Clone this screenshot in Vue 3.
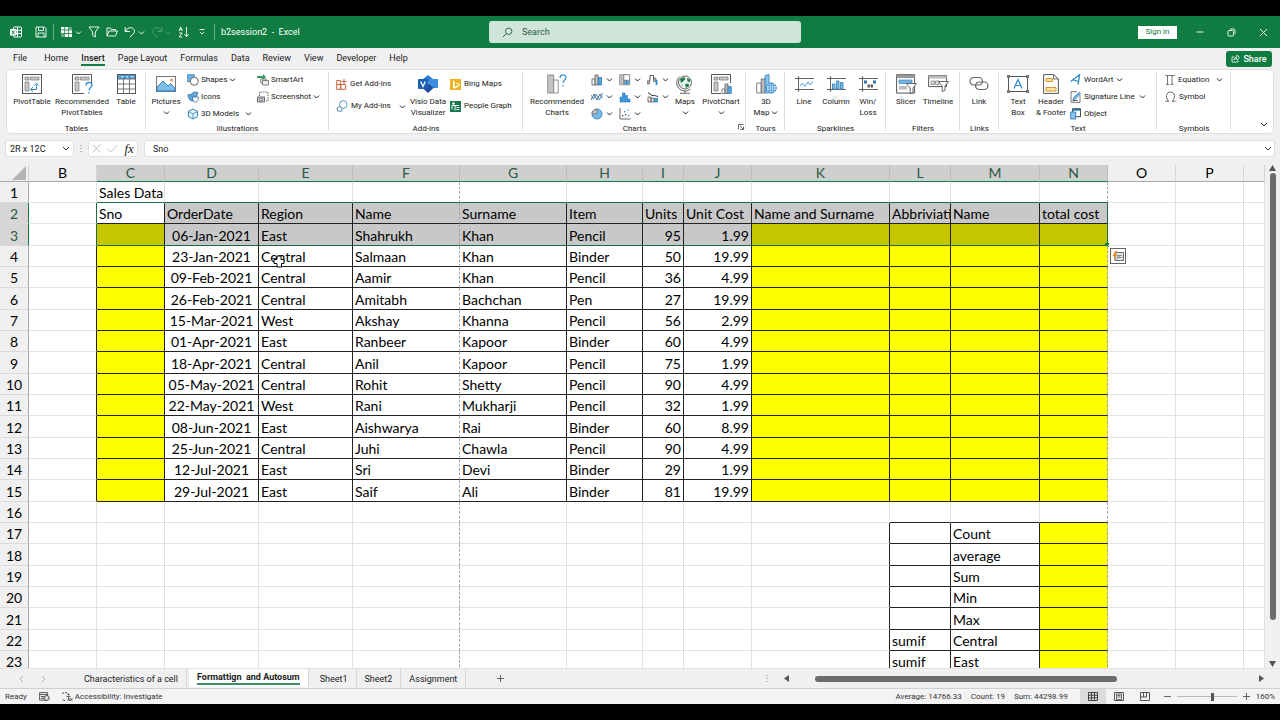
<script setup>
import { h, ref } from 'vue'

const chev = '<path d="M1 1.5 3.5 4 6 1.5" fill="none" stroke="currentColor" stroke-width="1"/>'

const icons = {
  chev: [7, 5, chev],
  excel: [12, 12, '<g fill="none" stroke="#fff"><rect x="3.5" y="1" width="8" height="10" rx="1"/><path d="M7.5 1v10M3.5 4.3h8M3.5 7.6h8"/></g><rect x="0" y="3" width="6.5" height="6.5" rx=".8" fill="#fff"/><path d="M1.7 4.5l3 3.6M4.7 4.5l-3 3.6" stroke="#107c41"/>'],
  save: [12, 12, '<g fill="none" stroke="#fff" stroke-width=".9"><path d="M1 1h8.5L11 2.5V11H1z"/><path d="M3.5 1v3.5h5V1M3 11V7h6v4"/></g>'],
  tableQ: [13, 12, '<path d="M1 1h11v10H1z" fill="#fff"/><path d="M1 4h11M1 7.5h11M4.7 1v10M8.4 1v10" stroke="#107c41" stroke-width=".8"/><path d="M8.8 1h3.2v3H8.8zM1 8h3.2v3H1z" fill="#5fae83"/>'],
  funnel: [12, 12, '<path d="M1 1h10L7.3 6v5L4.7 9.5V6z" fill="none" stroke="#fff" stroke-width=".9"/>'],
  folder: [12, 12, '<path d="M1 10V2h3.5l1 1.5h4V5M1 10l2-5h8.5l-2 5z" fill="none" stroke="#fff" stroke-width=".9"/>'],
  undo: [12, 12, '<path d="M1.2 1v4.5h4.5M1.4 5.3C3.5 1.7 6.5 1 8.6 2.2c2.3 1.4 2.4 4 .8 5.6L5.8 11.3" fill="none" stroke="#fff"/>'],
  redo: [12, 12, '<path d="M10.8 1v4.5H6.3M10.6 5.3C8.5 1.7 5.5 1 3.4 2.2 1.1 3.6 1 6.200 2.600 7.800L6.200 11.300" fill="none" stroke="#4e9f74"/>'],
  sort: [12, 12, '<g fill="none" stroke="#fff" stroke-width=".9"><path d="M1 5l1.700-4 1.700 4M1.600 3.700h2.200M1.200 7h3L1.200 11h3.200M8.500 1v9.500M6.300 8.200l2.200 2.500 2.200-2.500"/></g>'],
  more: [8, 8, '<path d="M1.500 1.500h5M2 4l2 2 2-2" fill="none" stroke="#fff" stroke-width=".9"/>'],
  search: [11, 11, '<path d="M1 10l3.500-3.500" stroke="#2c5c43"/><circle cx="6.700" cy="4.300" r="3.200" fill="none" stroke="#2c5c43" stroke-width=".9"/>'],
  min: [8, 8, '<path d="M.500 4h7" stroke="#fff" stroke-width=".9"/>'],
  restore: [9, 9, '<g fill="none" stroke="#fff" stroke-width=".9"><rect x="1" y="2.500" width="5.500" height="5.500" rx="1"/><path d="M3 1h3.500A1.500 1.500 0 018 2.500V6"/></g>'],
  close: [9, 9, '<path d="M1 1l7 7M8 1L1 8" stroke="#fff" stroke-width=".9"/>'],
  share: [9, 9, '<path d="M3.500 3H1v5h6V6.300M3 6c.300-2 1.500-3 3-3V1l2.500 2.700L6 6V4.500C4.700 4.500 3.800 5 3 6z" fill="none" stroke="#fff" stroke-width=".8"/>'],
  pivot: [20, 20, '<rect x=".5" y=".5" width="19" height="19" fill="#fff" stroke="#555"/><path d="M3 3h4v3H3zM8.500 3H17v3H8.500zM3 8h4v9H3z" fill="#c8c8c8" stroke="#777" stroke-width=".7"/><path d="M9 15.500h5.500v-5M11 13l-2.300 2.500 2.300 2.200M12.300 11.500l2.200-2.300 2.200 2.300" fill="none" stroke="#2b88d0"/>'],
  recPivot: [21, 20, '<path d="M12 19.500H.5V.5h19V9" fill="#fff" stroke="#555"/><path d="M3 3h4v3H3zM8.500 3H17v3H8.500zM3 8h4v9H3z" fill="#c8c8c8" stroke="#777" stroke-width=".7"/><path d="M14 11.500c0-4 6-4 6-.5 0 2.700-3 2.500-3 5.500M17 18v1.500" fill="none" stroke="#2b88d0" stroke-width="1.300"/>'],
  table: [19, 20, '<rect x=".5" y=".5" width="18" height="19" fill="#fff" stroke="#555"/><path d="M1 1h17v4H1z" fill="#4a9bd8"/><path d="M4 2.300h2.500L5.200 3.900zM9 2.300h2.500l-1.300 1.600zM14 2.300h2.500l-1.300 1.600z" fill="#fff"/><path d="M.5 5h18M.5 10h18M.5 15h18M6.500 5v15M12.500 5v15" stroke="#666" stroke-width=".9"/>'],
  picture: [20, 16, '<rect x=".5" y=".5" width="19" height="15" fill="#fff" stroke="#777"/><path d="M1 11l6-6 5 5 2.500-2.500L19 12v3H1z" fill="#7cbdea" stroke="#2878b8" stroke-width=".9"/><circle cx="15.500" cy="4" r="1.300" fill="#e0893c"/>'],
  shapes: [12, 12, '<path d="M.7.700h6.500v7H.7z" fill="#6fb5e8" stroke="#2b78b5" stroke-width=".8"/><circle cx="7.300" cy="7.300" r="4" fill="#fff" stroke="#555" stroke-width=".9"/>'],
  iconsI: [12, 12, '<path d="M1 3.500C2.500 4 4 3.500 5 2.500 7 .3 10 1 11 1.500L9.500 5.500C9 9.500 5 11.500 3 9 1.500 7.500 1 5.500 1 3.500z" fill="#5aa3d8" stroke="#2b6da5" stroke-width=".7"/><path d="M5.500 6h6c0 3-1 5-3 5s-3-2-3-5z" fill="#fff" stroke="#2b6da5" stroke-width=".8"/><circle cx="8" cy="2.800" r=".6" fill="#fff"/>'],
  cube: [12, 12, '<path d="M6 1l4.500 2.400v5.200L6 11 1.500 8.600V3.400z" fill="#eaf5fd" stroke="#2b88c0"/><path d="M1.500 3.400L6 6l4.500-2.600M6 6v5" fill="none" stroke="#2b88c0" stroke-width=".8"/>'],
  smart: [12, 12, '<path d="M0 2h6V0l3 3-2.500 3H5V4H0z" fill="#3a9c64"/><path d="M3.500 5h6v4h-6z" fill="#d9d9d9" stroke="#777" stroke-width=".7"/><path d="M5.500 6.500h6V11h-6z" fill="#eee" stroke="#666" stroke-width=".8"/>'],
  shot: [12, 12, '<path d="M2.500 5V1h8.500v9H9" fill="none" stroke="#666" stroke-dasharray="1.500 1"/><rect x=".5" y="6" width="7" height="5" fill="#ccc" stroke="#555" stroke-width=".8"/><circle cx="4" cy="8.500" r="1.400" fill="#fff" stroke="#444" stroke-width=".7"/>'],
  getAdd: [11, 11, '<path d="M.7 1.500h4v4h-4zM.7 5.500h4v4.800h-4zM4.700 5.500h5v4.800h-5zM8 0v5M5.700 2.500h4.800" fill="none" stroke="#c9522e" stroke-width=".9"/>'],
  myAdd: [12, 12, '<circle cx="7.300" cy="4.500" r="3.800" fill="none" stroke="#4794bf" stroke-width=".9"/><path d="M3.500 6.500L1 8l.500 3 4 .300.700-3z" fill="#fff" stroke="#4d7f9e" stroke-width=".9"/>'],
  visio: [20, 18, '<path d="M10 0l5 4-5 4-5-4z" fill="#2d7fd1"/><path d="M11 4h9v9h-9z" fill="#3a8de0"/><path d="M10 8l5.500 5-5.500 5-5.500-5z" fill="#1b4f9e"/><rect x="0" y="4" width="10" height="10" rx="1" fill="#1a5fb4"/><path d="M2.700 6.500L5 11.500l2.300-5" fill="none" stroke="#fff" stroke-width="1.300"/>'],
  bing: [11, 11, '<path d="M0 0h11v11H0z" fill="#edb21d"/><path d="M3 1.500l1.700.7v5.600L9 5.800 6.500 4.500l-.500-1 3.500 1.300v2L4.700 9.700 3 8.700z" fill="#fff"/>'],
  people: [11, 11, '<path d="M0 0h11v11H0z" fill="#17794a"/><circle cx="3.500" cy="2.500" r="1.200" fill="#fff"/><path d="M2 4.500h7M2 4.500v4M5 4.500v5M6.500 6.500h3M6.500 8.500h3" stroke="#fff"/>'],
  recChart: [20, 20, '<path d="M.7 1h6v18h-6z" fill="#c4c4c4" stroke="#777" stroke-width=".8"/><path d="M6.700 6h4.500v13H6.700z" fill="#fff" stroke="#777" stroke-width=".8"/><path d="M13 4c0-4 6-4 6-.5 0 2.700-3 2.500-3 5.500M16 11v1.500" fill="none" stroke="#3d93cf" stroke-width="1.300"/>'],
  bar: [12, 12, '<path d="M1 5h3v6H1z" fill="#fff" stroke="#555" stroke-width=".8"/><path d="M4 1h3v10H4z" fill="#c9c9c9" stroke="#555" stroke-width=".8"/><path d="M7.500 3.500h3V11h-3z" fill="#58a6de" stroke="#2b78b5" stroke-width=".8"/>'],
  tree: [12, 12, '<path d="M.7.700h10v10H.7z" fill="#fff" stroke="#666" stroke-width=".8"/><path d="M.7.700h4v10h-4z" fill="#bbb"/><path d="M5 6.500h5.500v4H5z" fill="#5cabe2"/><path d="M4.800.700v10M4.800 6.300h6M7.700 6.300v4.400" stroke="#666" stroke-width=".7"/>'],
  water: [12, 12, '<path d="M0 7h3V1.500h3.500V6" fill="none" stroke="#555"/><path d="M0 7v3h2.500V7M6.500 4H9v3.500H6.500z" fill="#aaa" stroke="#555" stroke-width=".6"/><path d="M9.500 6v5" stroke="#2b88d0" stroke-width="1.800"/>'],
  lineC: [12, 12, '<path d="M0 9l3-6 3 6 3-6 2.500 4" fill="none" stroke="#555" stroke-width=".9"/><path d="M0 4l2.500 4L5 3l3.500 6L11.500 2" fill="none" stroke="#2b88d0" stroke-width=".9"/>'],
  hist: [12, 12, '<path d="M1 11V6h2.500V2H6v2.500h2.500V8H11v3z" fill="#3d98db" stroke="#2b78b5" stroke-width=".6"/>'],
  combo: [12, 12, '<path d="M1 6h3v5H1zM4 7h3v4H4z" fill="#eee" stroke="#555" stroke-width=".8"/><path d="M7.500 7.500h3V11h-3z" fill="#58a6de" stroke="#2b78b5" stroke-width=".8"/><path d="M1 1.500L5 4.500h2.500l3.500 1" fill="none" stroke="#333"/>'],
  pie: [12, 12, '<circle cx="6" cy="6" r="5" fill="#76baea" stroke="#2b78b5" stroke-width=".8"/><path d="M6 6V1a5 5 0 00-5 5z" fill="#c4c4c4" stroke="#666" stroke-width=".7"/>'],
  scatter: [12, 12, '<path d="M1 0v11h10.500" fill="none" stroke="#555" stroke-width=".9"/><path d="M3 7h1.300v1.300H3zM6 6h1.300v1.300H6z" fill="#333"/><path d="M5 3h1.300v1.300H5zM8.500 1.500h1.300v1.300H8.500zM9 7h1.300v1.300H9z" fill="#2b88d0"/>'],
  maps: [18, 20, '<circle cx="9" cy="8.500" r="6.500" fill="#eef6f1" stroke="#555" stroke-width=".9"/><path d="M4 5l4-2 1.500 2L7 7.500 5 9zM11 4l3 1.500V8l-2.500-.5zM9 10l3.500-.5L13 12l-3 2zM4.500 10l2 1.500V13z" fill="#1f7a48"/><path d="M3.500 2.500A8.300 8.300 0 0014.500 15M9 16.500V19M4 19.300h10" fill="none" stroke="#555" stroke-width=".9"/>'],
  pivotChart: [21, 20, '<path d="M10 19.500H.5V.5h19V9" fill="#fff" stroke="#555"/><path d="M3 3h4v3H3zM8.500 3H17v3H8.500zM3 8h4v9H3z" fill="#c8c8c8" stroke="#777" stroke-width=".7"/><path d="M11 15h3v4.500h-3z" fill="#fff" stroke="#555" stroke-width=".7"/><path d="M14 10h3v9.500h-3z" fill="#bbb" stroke="#555" stroke-width=".7"/><path d="M17 12.500h3.300v7H17z" fill="#58a6de" stroke="#2b78b5" stroke-width=".7"/>'],
  map3d: [21, 20, '<path d="M.7 9h4.500v10H.7z" fill="#fff" stroke="#666" stroke-width=".8"/><path d="M5.200 5h4v14h-4z" fill="#bbb" stroke="#666" stroke-width=".8"/><path d="M9.200 1.500L13 .5V19H9.200z" fill="#8cc6ee" stroke="#2b78b5" stroke-width=".8"/><circle cx="15.300" cy="14" r="5" fill="#eaf5fd" stroke="#2b88d0" stroke-width=".9"/><path d="M10.300 14h10M15.300 9v10M11 11.500h8.600M11 16.500h8.600" stroke="#2b88d0" stroke-width=".7"/><ellipse cx="15.300" cy="14" rx="2.300" ry="5" fill="none" stroke="#2b88d0" stroke-width=".7"/>'],
  spLine: [19, 16, '<path d="M0 2.500h19M0 13.500h19M3.500 0v16" stroke="#555" stroke-width=".9"/><path d="M5 10l2.500-3 2.500 3.500L13 6l2 3 3-4" fill="none" stroke="#3b93cf" stroke-width=".9"/>'],
  spCol: [19, 16, '<path d="M0 2.500h19M0 13.500h19M3.500 0v16" stroke="#555" stroke-width=".9"/><path d="M5.500 8h2.500v5H5.500zM9.500 5H12v8H9.500zM13.500 6.500H16V13h-2.500z" fill="#7cbdea" stroke="#2b78b5" stroke-width=".8"/>'],
  spWin: [19, 16, '<path d="M0 2.500h19M0 13.500h19M3.500 0v16" stroke="#555" stroke-width=".9"/><path d="M5 4.500h3v3H5zM14 4.500h3v3h-3z" fill="#2b78b5"/><path d="M8.500 8.500h2.300v3H8.500zM11.600 8.500h2.300v3h-2.300z" fill="#555"/>'],
  slicer: [21, 20, '<path d="M.6.600h18v18.500H.6z" fill="#fff" stroke="#555"/><path d="M.6.600h18v3.500H.6z" fill="#999"/><path d="M3 6h13v3.500H3z" fill="#6db3e6" stroke="#2b78b5" stroke-width=".6"/><path d="M3 12h8v3.500H3z" fill="#bbb"/><path d="M10.500 9.500h10L17 14v4.500l-2.800 1V14z" fill="#fff" stroke="#555" stroke-width=".9"/>'],
  timeline: [21, 17, '<path d="M.6.600h18v11H.6z" fill="#fff" stroke="#555"/><path d="M.6.600h18v3H.6z" fill="#bbb"/><path d="M3 6h3.500v3.500H3zM7.500 6H11v3.500H7.500z" fill="#ddd" stroke="#888" stroke-width=".8"/><path d="M10.500 6.500h10L17 11v4.500l-2.800 1V11z" fill="#fff" stroke="#555" stroke-width=".9"/>'],
  link: [20, 15, '<rect x="1" y="1.500" width="12.500" height="7.500" rx="3.700" fill="none" stroke="#666" stroke-width="1.200"/><rect x="6.500" y="6" width="12.500" height="7.500" rx="3.700" fill="none" stroke="#666" stroke-width="1.200"/>'],
  textBox: [22, 18, '<rect x="1.500" y="1.500" width="19" height="15" fill="#fff" stroke="#555"/><path d="M0 0h3v3H0zM19 0h3v3h-3zM0 15h3v3H0zM19 15h3v3h-3z" fill="#777"/><path d="M7 13.500L11 4.500l4 9M8.500 10.500h5" fill="none" stroke="#2b88d0" stroke-width="1.200"/>'],
  header: [16, 20, '<path d="M.6.600h10L15.400 5v14.400H.6z" fill="#fff" stroke="#555"/><path d="M10.600.600V5h4.800" fill="none" stroke="#555" stroke-width=".8"/><path d="M3 4.500h6.500v3H3zM3 13.500h10v3.500H3z" fill="#fde5a5" stroke="#d08a1d" stroke-width=".9"/>'],
  wordart: [11, 11, '<path d="M.7 7.500L9.500.800 8 10.500M3.500 6l5 1.500" fill="none" stroke="#2b88c0" stroke-width="1.300"/>'],
  sign: [11, 12, '<path d="M1 .7h6M1 .7v10.600h9V4" fill="#fff" stroke="#666" stroke-width=".9"/><path d="M3 9l1-3 5.500-5 1 1.500L5.500 8z" fill="#7cbdea" stroke="#2b78b5" stroke-width=".7"/><path d="M2.500 9.500h5" stroke="#333" stroke-width=".8"/>'],
  object: [11, 12, '<path d="M2.500.700h8v8h-8z" fill="#fff" stroke="#333" stroke-width=".9"/><path d="M2.500.700h8v2h-8z" fill="#2b78b5"/><path d="M.7 4h5v7h-5z" fill="#8cc6ee" stroke="#2b78b5" stroke-width=".9"/>'],
  pi: [10, 10, '<path d="M0 .6h10M2.500.600v8.800M7 .6v8.800M1 9.400h3M5.500 9.400h3" fill="none" stroke="#666" stroke-width=".9"/>'],
  omega: [11, 11, '<path d="M.5 10.300h3.300C.3 7 .8 1 5.500 1s5.200 6 1.700 9.300h3.300" fill="none" stroke="#666"/>'],
  launcher: [6, 6, '<path d="M5.500.500h-5v5M2 2l3 3M5.500 2.500v3h-3" fill="none" stroke="#444" stroke-width=".8"/>'],
  collapse: [8, 5, '<path d="M1 1l3 3 3-3" fill="none" stroke="#333"/>'],
  cross: [9, 9, '<path d="M.5.500l8 8M8.500.500l-8 8" stroke="#b9b9b9" stroke-width=".9"/>'],
  check: [11, 9, '<path d="M.5 5l3 3L10.500 1" fill="none" stroke="#b9b9b9" stroke-width=".9"/>'],
  dots: [2, 9, '<path d="M.5 1h1v1h-1zM.5 4h1v1h-1zM.5 7h1v1h-1z" fill="#888"/>'],
  corner: [14, 14, '<path d="M14 0v14H0z" fill="#b4b4b4"/>'],
  quick: [12, 10, '<rect x="3" y="1.500" width="8.500" height="8" fill="#e4e4e4" stroke="#666" stroke-width=".9"/><path d="M5 4.500h5M5 6h3M4 8l2.500-1.500h4" fill="none" stroke="#777" stroke-width=".8"/><path d="M3.500 0L.5 5h2L1.500 9l4-5.500h-2L5.500 0z" fill="#e58a2c"/>'],
  cursor: [12, 14, '<path d="M4 1h4v3.500h3v4H8.500V12H4V8.500H1v-4h3z" fill="#fff" stroke="#000" stroke-width="1"/>'],
  prev: [5, 8, '<path d="M4 1L1 4l3 3" fill="none" stroke="#b0b0b0"/>'],
  next: [5, 8, '<path d="M1 1l3 3-3 3" fill="none" stroke="#b0b0b0"/>'],
  plus: [7, 7, '<path d="M3.500 0v7M0 3.500h7" stroke="#555" stroke-width=".9"/>'],
  minus: [7, 7, '<path d="M0 3.500h7" stroke="#555" stroke-width=".9"/>'],
  up: [7, 6, '<path d="M3.500 0L7 6H0z" fill="#555"/>'],
  down: [7, 6, '<path d="M3.500 6L0 0h7z" fill="#555"/>'],
  left: [5, 7, '<path d="M0 3.500L5 0v7z" fill="#555"/>'],
  right: [5, 7, '<path d="M5 3.500L0 0v7z" fill="#555"/>'],
  macro: [11, 9, '<path d="M.6.600h8v7.500h-8zM.6 2.500h8M2 4.500h3M2 6.300h3" fill="none" stroke="#444" stroke-width=".9"/><circle cx="7.700" cy="6" r="2.500" fill="#ddd" stroke="#444" stroke-width=".9"/>'],
  access: [11, 10, '<path d="M5 1A4 4 0 103 8.500" fill="none" stroke="#444" stroke-dasharray="2 1"/><circle cx="6.500" cy="2.500" r="1" fill="#444"/><path d="M4.500 4.500h4M6.500 4.500V6M6 9l.5-3 1.500 3M8 6l2.500 3M10.500 6L8 9" fill="none" stroke="#444" stroke-width=".8"/>'],
  normal: [10, 9, '<path d="M.5.500h9v8h-9zM3.500.500v8M6.500.500v8M.5 3.200h9M.5 5.800h9" fill="none" stroke="#333" stroke-width=".9"/>'],
  page: [10, 9, '<path d="M.5.500h9v8h-9z" fill="none" stroke="#444" stroke-width=".9"/><path d="M2.500 2h5v5.500h-5zM3.500 3.500h3M3.500 5h3" fill="none" stroke="#444" stroke-width=".8"/>'],
  pbreak: [10, 9, '<path d="M.5.500h9v8h-9zM3.500.500V5M6.500.500V5M.5 5h6" fill="none" stroke="#444" stroke-width=".9"/>'],
}

const Ico = (p) => {
  const [w, ht, body] = icons[p.n]
  return h('svg', { viewBox: `0 0 ${w} ${ht}`, width: w, height: ht, 'aria-hidden': 'true', innerHTML: body })
}
Ico.props = ['n']

const menus = ['File', 'Home', 'Insert', 'Page Layout', 'Formulas', 'Data', 'Review', 'View', 'Developer', 'Help']

const groups = [
  { id: 'tables', label: 'Tables', cols: [
    { big: 'pivot', text: ['PivotTable'], w: 'w40' },
    { big: 'recPivot', text: ['Recommended', 'PivotTables'], w: 'w60' },
    { big: 'table', text: ['Table'], w: 'w28' }] },
  { id: 'illus', label: 'Illustrations', cols: [
    { big: 'picture', text: ['Pictures'], drop: true, w: 'w36' },
    { w: 'w72', rows: [['shapes', 'Shapes', 1], ['iconsI', 'Icons'], ['cube', '3D Models', 2]] },
    { w: 'w60', rows: [['smart', 'SmartArt'], ['shot', 'Screenshot', 1]] }] },
  { id: 'addins', label: 'Add-ins', cols: [
    { w: 'w72', two: true, rows: [['getAdd', 'Get Add-ins'], ['myAdd', 'My Add-ins', 2]] },
    { big: 'visio', text: ['Visio Data', 'Visualizer'], w: 'w40' },
    { w: 'w64', two: true, rows: [['bing', 'Bing Maps'], ['people', 'People Graph']] }] },
  { id: 'charts', label: 'Charts', launcher: true, cols: [
    { big: 'recChart', text: ['Recommended', 'Charts'], w: 'w60' },
    { w: 'w28', rows: [['bar', '', 1], ['lineC', '', 1], ['pie', '', 1]] },
    { w: 'w28', rows: [['tree', '', 1], ['hist', '', 1], ['scatter', '', 1]] },
    { w: 'w28', rows: [['water', '', 1], ['combo', '', 1]] },
    { big: 'maps', text: ['Maps'], drop: true, w: 'w28' },
    { big: 'pivotChart', text: ['PivotChart'], drop: true, w: 'w44' }] },
  { id: 'tours', label: 'Tours', cols: [{ big: 'map3d', text: ['3D', 'Map'], inline: true, w: 'w36' }] },
  { id: 'spark', label: 'Sparklines', cols: [
    { big: 'spLine', text: ['Line'], w: 'w28' },
    { big: 'spCol', text: ['Column'], w: 'w36' },
    { big: 'spWin', text: ['Win/', 'Loss'], w: 'w28' }] },
  { id: 'filters', label: 'Filters', cols: [
    { big: 'slicer', text: ['Slicer'], w: 'w28' },
    { big: 'timeline', text: ['Timeline'], w: 'w36' }] },
  { id: 'links', label: 'Links', cols: [{ big: 'link', text: ['Link'], w: 'w28' }] },
  { id: 'text', label: 'Text', cols: [
    { big: 'textBox', text: ['Text', 'Box'], w: 'w28' },
    { big: 'header', text: ['Header', '& Footer'], w: 'w36' },
    { w: 'w80', rows: [['wordart', 'WordArt', 1], ['sign', 'Signature Line', 2], ['object', 'Object']] }] },
  { id: 'symbols', label: 'Symbols', cols: [
    { w: 'w64', rows: [['pi', 'Equation', 2], ['omega', 'Symbol']] }] },
]

const cols = 'BCDEFGHIJKLMNOPQ'.split('')
const orders = [
  ['06-Jan-2021', 'East', 'Shahrukh', 'Khan', 'Pencil', '95', '1.99'],
  ['23-Jan-2021', 'Central', 'Salmaan', 'Khan', 'Binder', '50', '19.99'],
  ['09-Feb-2021', 'Central', 'Aamir', 'Khan', 'Pencil', '36', '4.99'],
  ['26-Feb-2021', 'Central', 'Amitabh', 'Bachchan', 'Pen', '27', '19.99'],
  ['15-Mar-2021', 'West', 'Akshay', 'Khanna', 'Pencil', '56', '2.99'],
  ['01-Apr-2021', 'East', 'Ranbeer', 'Kapoor', 'Binder', '60', '4.99'],
  ['18-Apr-2021', 'Central', 'Anil', 'Kapoor', 'Pencil', '75', '1.99'],
  ['05-May-2021', 'Central', 'Rohit', 'Shetty', 'Pencil', '90', '4.99'],
  ['22-May-2021', 'West', 'Rani', 'Mukharji', 'Pencil', '32', '1.99'],
  ['08-Jun-2021', 'East', 'Aishwarya', 'Rai', 'Binder', '60', '8.99'],
  ['25-Jun-2021', 'Central', 'Juhi', 'Chawla', 'Pencil', '90', '4.99'],
  ['12-Jul-2021', 'East', 'Sri', 'Devi', 'Binder', '29', '1.99'],
  ['29-Jul-2021', 'East', 'Saif', 'Ali', 'Binder', '81', '19.99'],
]
const cells = { C1: 'Sales Data' }
;['Sno', 'OrderDate', 'Region', 'Name', 'Surname', 'Item', 'Units', 'Unit Cost', 'Name and Surname', 'Abbriviati', 'Name', 'total cost']
  .forEach((t, i) => { cells[cols[i + 1] + 2] = t })
orders.forEach((o, r) => o.forEach((t, i) => { cells[cols[i + 2] + (r + 3)] = t }))
;['Count', 'average', 'Sum', 'Min', 'Max', 'Central', 'East'].forEach((t, i) => { cells['M' + (17 + i)] = t })
cells.L22 = 'sumif'
cells.L23 = 'sumif'

const between = (c, a, b) => c >= a && c <= b
const cellClass = (c, r) => {
  const order = between(r, 2, 15)
  const summary = r >= 17
  const selected = between(r, 2, 3) && between(c, 'C', 'N') && !(c === 'C' && r === 2)
  const yellow = (order && r > 2 && (c === 'C' || between(c, 'K', 'N'))) || (summary && c === 'N')
  return {
    yellow, selected,
    inkR: (order && between(c, 'B', 'M') && c !== 'F') || (summary && between(c, 'K', 'M')),
    inkB: (order && between(c, 'C', 'N')) || (r >= 16 && between(c, 'L', 'N')),
    pageR: c === 'F' || (c === 'N' && !between(r, 2, 3)),
    selB: (r === 1 || r === 3) && between(c, 'C', 'N'),
    selR: between(r, 2, 3) && (c === 'B' || c === 'N'),
    num: r > 2 && (c === 'I' || c === 'J'),
    date: r > 2 && c === 'D',
  }
}

const sheets = ['Characteristics of a cell', 'Formattign  and Autosum', 'Sheet1', 'Sheet2', 'Assignment']
const query = ref('')
const nameBox = ref('2R x 12C')
const formula = ref('Sno')
const zoom = ref(60)
</script>

<template>
  <div class="screen">
    <header class="title">
      <div class="qat">
        <Ico n="excel" class="logo" />
        <button aria-label="Save"><Ico n="save" /></button>
        <i class="bar"></i>
        <button aria-label="Table"><Ico n="tableQ" /><Ico n="chev" /></button>
        <button aria-label="Filter"><Ico n="funnel" /></button>
        <button aria-label="Open"><Ico n="folder" /></button>
        <button aria-label="Undo"><Ico n="undo" /><Ico n="chev" /></button>
        <button aria-label="Redo" class="dim"><Ico n="redo" /><Ico n="chev" /></button>
        <button aria-label="Sort"><Ico n="sort" /></button>
        <button aria-label="Customize" class="last"><Ico n="more" /></button>
        <i class="bar"></i>
        <span class="doc">b2session2&nbsp; - &nbsp;Excel</span>
      </div>
      <label class="search"><Ico n="search" /><input v-model="query" type="text" placeholder="Search" aria-label="Search"></label>
      <div class="win">
        <button class="signin">Sign in</button>
        <button aria-label="Minimize"><Ico n="min" /></button>
        <button aria-label="Restore"><Ico n="restore" /></button>
        <button aria-label="Close"><Ico n="close" /></button>
      </div>
    </header>

    <nav class="menu">
      <button v-for="m in menus" :key="m" :class="{ on: m === 'Insert' }">{{ m }}</button>
      <button class="share"><Ico n="share" />Share</button>
    </nav>

    <div class="band">
      <section class="ribbon">
        <div v-for="g in groups" :key="g.id" class="group" :class="g.id">
          <div class="tools">
            <template v-for="(c, i) in g.cols" :key="i">
              <button v-if="c.big" class="big" :class="c.w">
                <span class="pic"><Ico :n="c.big" /></span>
                <span v-for="(t, k) in c.text" :key="t" class="ln">{{ t }}<Ico v-if="c.inline && k === 1" n="chev" /></span>
                <span v-if="c.drop" class="ln"><Ico n="chev" /></span>
              </button>
              <div v-else class="stack" :class="[c.w, { two: c.two }]">
                <button v-for="r in c.rows" :key="r[0]" class="small" :class="{ far: r[2] === 2 }" :aria-label="r[1] || r[0]">
                  <Ico :n="r[0]" /><span v-if="r[1]">{{ r[1] }}</span><Ico v-if="r[2]" n="chev" class="drop" />
                </button>
              </div>
            </template>
          </div>
          <div class="caption">{{ g.label }}<button v-if="g.launcher" class="launch" aria-label="Chart options"><Ico n="launcher" /></button></div>
        </div>
        <button class="collapse" aria-label="Collapse ribbon"><Ico n="collapse" /></button>
      </section>
    </div>

    <section class="formula">
      <div class="box name"><input v-model="nameBox" type="text" aria-label="Name box"><button aria-label="Names"><Ico n="collapse" /></button></div>
      <Ico n="dots" />
      <div class="box fx">
        <button aria-label="Cancel"><Ico n="cross" /></button>
        <button aria-label="Enter"><Ico n="check" /></button>
        <button class="f" aria-label="Insert function">fx</button>
      </div>
      <div class="box entry"><input v-model="formula" type="text" aria-label="Formula bar"><button aria-label="Expand"><Ico n="collapse" /></button></div>
    </section>

    <main class="body">
      <div class="sheet">
        <table>
          <colgroup><col class="c0"><col v-for="c in cols" :key="c" :class="'c' + c"></colgroup>
          <thead>
            <tr>
              <th class="all"><Ico n="corner" /></th>
              <th v-for="c in cols" :key="c" :class="{ hot: between(c, 'C', 'N') }">{{ c === 'Q' ? '' : c }}</th>
            </tr>
          </thead>
          <tbody>
            <tr v-for="r in 23" :key="r">
              <th :class="{ hot: r === 2 || r === 3 }">{{ r }}</th>
              <td v-for="c in cols" :key="c" :class="cellClass(c, r)">
                <div>{{ cells[c + r] }}</div>
                <i v-if="c === 'N' && r === 3" class="handle"></i>
                <button v-if="c === 'O' && r === 4" class="quick" aria-label="Quick analysis"><Ico n="quick" /></button>
                <Ico v-if="c === 'E' && r === 4" n="cursor" class="cursor" />
              </td>
            </tr>
          </tbody>
        </table>
      </div>
      <div class="vscroll"><Ico n="up" /><i></i><Ico n="down" /></div>
    </main>

    <div class="tabs">
      <button class="nav" aria-label="Previous sheet"><Ico n="prev" /></button>
      <button class="nav" aria-label="Next sheet"><Ico n="next" /></button>
      <div class="list">
        <button v-for="(s, i) in sheets" :key="s" class="tab" :class="{ on: i === 1 }"><span>{{ s }}</span></button>
      </div>
      <button class="add" aria-label="New sheet"><Ico n="plus" /></button>
      <Ico n="dots" class="grip" />
      <div class="hscroll"><Ico n="left" /><span><i></i></span><Ico n="right" /></div>
    </div>

    <footer class="status">
      <span class="ready">Ready</span>
      <Ico n="macro" />
      <span class="acc"><Ico n="access" />Accessibility: Investigate</span>
      <span class="stats"><span>Average: 14766.33</span><span>Count: 19</span><span>Sum: 44298.99</span></span>
      <span class="views">
        <button class="on" aria-label="Normal"><Ico n="normal" /></button>
        <button aria-label="Page layout"><Ico n="page" /></button>
        <button aria-label="Page break"><Ico n="pbreak" /></button>
      </span>
      <button aria-label="Zoom out"><Ico n="minus" /></button>
      <input v-model="zoom" type="range" min="0" max="100" aria-label="Zoom">
      <button aria-label="Zoom in"><Ico n="plus" /></button>
      <span class="pct">160%</span>
    </footer>
  </div>
</template>

<style>
html, body { margin: 0; background: #000; }
</style>

<style scoped>
* { box-sizing: border-box; }
.screen {
  display: flex; flex-direction: column; height: 100vh; padding: 16px 0;
  background: #000; color: #222; overflow: hidden;
  font: 8px/12px Roboto, "Open Sans", sans-serif;
}
button, input { font: inherit; color: inherit; border: 0; padding: 0; margin: 0; background: none; outline: 0; }
button { display: flex; align-items: center; justify-content: center; white-space: nowrap; }
svg { display: block; flex: none; }

.title { display: flex; align-items: center; height: 32px; flex: none; background: #107c41; color: #fff; }
.qat { display: flex; align-items: center; gap: 6px; padding-left: 10px; flex: 1; }
.qat button { gap: 2px; }
.qat .logo { margin-right: 7px; }
.qat .dim { color: #4e9f74; }
.qat .last { margin: 0 2px; }
.bar { width: 1px; height: 16px; background: #6fb18d; }
.doc { font-size: 9px; }
.search {
  display: flex; align-items: center; gap: 9px; width: 312px; height: 22px; padding-left: 13px; margin-left: 12px;
  background: #cfe5d9; border-radius: 3px; color: #2c5c43; font-size: 9px;
}
.search input { flex: 1; min-width: 0; }
.search input::placeholder { color: #2c5c43; opacity: 1; }
.win { flex: 1; display: flex; align-items: center; justify-content: flex-end; gap: 23px; padding-right: 12px; }
.signin { width: 39px; height: 13px; background: #fff; color: #107c41; }
.win .signin { margin-right: -4px; }

.menu { display: flex; align-items: center; gap: 13px; height: 21px; flex: none; padding: 0 8px 0 13px; background: #f0f0f0; font-size: 9px; }
.menu button { height: 15px; border-bottom: 2px solid transparent; }
.menu button:first-child { margin-right: 4px; }
.menu .on { font-weight: 500; border-color: #107c41; }
.menu .share { margin-left: auto; gap: 3px; width: 46px; height: 16px; border: 0; border-radius: 3px; background: #107c41; color: #fff; font-weight: 500; }

.band { flex: none; padding: 0 6px; background: #f0f0f0; }
.ribbon { display: flex; height: 65px; position: relative; background: #fff; border: 1px solid #dedede; border-radius: 5px; }
.group { display: flex; flex-direction: column; position: relative; margin-top: 1px; flex: none; }
.group::after { content: ""; position: absolute; right: 0; top: 1px; bottom: 3px; width: 1px; background: #dedede; }
.tools { display: flex; height: 51px; flex: none; }
.caption { display: flex; justify-content: center; height: 12px; line-height: 13px; }
.launch { position: absolute; right: 2px; bottom: 3px; }
.big { flex-direction: column; justify-content: flex-start; line-height: 11px; }
.pic { display: flex; align-items: center; height: 25px; }
.ln { display: flex; align-items: center; gap: 2px; height: 11px; }
.stack { display: grid; grid-template-rows: repeat(3, 17px); }
.stack.two { grid-template-rows: repeat(2, 22px); padding-top: 2px; }
.small { justify-content: flex-start; gap: 3px; }
.small.far .drop { margin-left: auto; }
.w28 { width: 28px; } .w36 { width: 36px; } .w40 { width: 40px; } .w44 { width: 44px; }
.w60 { width: 60px; } .w64 { width: 64px; } .w72 { width: 66px; } .w80 { width: 76px; }
.tables { width: 139px; } .tables .tools { padding-left: 5px; }
.illus { width: 183px; } .illus .tools { padding-left: 2px; gap: 3px; } .illus .w72 { width: 65px; margin-right: 2px; }
.illus .small { gap: 2px; }
.addins { width: 194px; } .addins .tools { padding-left: 7px; gap: 2px; } .addins .w72 { width: 70px; }
.charts { width: 223px; } .charts .tools { padding-left: 4px; } .charts .stack { padding-left: 4px; }
.tours { width: 39px; } .tours .tools { padding-left: 2px; }
.spark { width: 101px; } .spark .tools { padding-left: 5px; }
.filters { width: 74px; } .filters .tools { padding-left: 6px; }
.links { width: 39px; } .links .tools { padding-left: 5px; }
.text { width: 158px; } .text .tools { padding-left: 5px; gap: 1px; }
.symbols { width: 74px; } .symbols .tools { padding-left: 8px; }
.symbols .w64 { width: 58px; }
.collapse { position: absolute; right: 5px; bottom: 6px; }

.formula { display: flex; align-items: center; gap: 6px; height: 31px; flex: none; padding: 0 5px 2px; background: #f0f0f0; }
.box { display: flex; align-items: center; height: 17px; background: #fff; border: 1px solid #e0e0e0; border-radius: 3px; }
.name { width: 69px; padding: 0 3px 0 4px; font-size: 9px; }
.name input, .entry input { flex: 1; min-width: 0; }
.fx { width: 50px; justify-content: space-around; }
.f { font: italic 13px/14px "Liberation Serif", serif; color: #222; }
.entry { flex: 1; padding: 0 2px 0 8px; font-size: 9px; }

.body { flex: 1; min-height: 0; display: flex; background: #f0f0f0; }
.sheet { flex: 1; min-width: 0; overflow: hidden; background: #fff; }
table { width: 100%; table-layout: fixed; border-collapse: separate; border-spacing: 0; font: 14px/20px Lato, "Noto Sans", sans-serif; color: #000; }
.c0 { width: 29px; } .cB, .cC, .cJ, .cN, .cO, .cP { width: 68px; }
.cD, .cE { width: 94px; } .cF, .cG { width: 107px; } .cH { width: 76px; } .cI { width: 41px; }
.cK { width: 138px; } .cL { width: 61px; } .cM { width: 89px; }
th, td { height: 21px; padding: 0; position: relative; }
tbody tr:nth-child(3n) > * { height: 22px; }
th { font-weight: 400; background: #f0f0f0; border-right: 1px solid #d4d4d4; text-align: center; }
thead th { height: 17px; line-height: 16px; border-bottom: 1px solid #a8a8a8; }
thead .hot { background: #cfcfcf; color: #2a5a43; border-bottom-color: #107c41; border-right-color: #bdbdbd; }
.all svg { margin: 0 2px 0 auto; }
tbody th { padding-top: 1px; line-height: 19px; border-right-color: #a8a8a8; border-bottom: 1px solid #dadada; }
tbody .hot { background: #d6d6d6; color: #2a5a43; border-right-color: #107c41; }
td { border-right: 1px solid #e2e2e2; border-bottom: 1px solid #e2e2e2; }
td > div { height: 20px; padding: 1px 2px 0; overflow: hidden; white-space: nowrap; }
.date { text-align: center; } .num { text-align: right; }
.yellow { background: #ff0; }
.selected { background: #c8c8c8; }
.selected.yellow { background: #c6c600; }
.inkR { border-right-color: #222; }
.inkB { border-bottom-color: #222; }
.pageR { border-right: 1px dashed #a6a6a6; }
.selB { border-bottom-color: #1c6b43; }
.selR { border-right: 1px solid #1c6b43; }
.handle { position: absolute; right: -2px; bottom: -2px; width: 4px; height: 4px; background: #107c41; }
.quick { position: absolute; left: 2px; top: 2px; width: 16px; height: 16px; background: #fff; border: 1px solid #666; }
.cursor { position: absolute; left: 14px; top: 9px; }

.vscroll { width: 15px; flex: none; display: flex; flex-direction: column; align-items: center; padding-bottom: 1px; gap: 2px; }
.vscroll i { width: 6px; height: 89%; border-radius: 3px; background: #6c6c6c; }
.vscroll svg:last-child { margin-top: auto; }

.tabs { display: flex; align-items: center; height: 21px; flex: none; background: #f0f0f0; border-bottom: 1px solid #d0d0d0; border-top: 1px solid #e2e2e2; font-size: 9px; }
.nav { width: 22px; }
.nav:first-child { margin-left: 10px; }
.list { display: flex; margin-left: 22px; height: 20px; }
.tab { padding: 0 8px; border-right: 1px solid #d8d8d8; }
.tab span { white-space: pre; }
.tab.on { padding: 0 8px; margin: 0 3px 0 2px; height: 18px; background: #fff; font-weight: 700; color: #222; }
.tab.on span { border-bottom: 2px solid #3f8f66; }
.add { margin-left: 31px; }
.grip { margin-left: auto; }
.hscroll { display: flex; align-items: center; width: 40%; padding: 0 16px; }
.hscroll span { flex: 1; padding-left: 26px; }
.hscroll i { display: block; width: 68%; height: 6px; border-radius: 3px; background: #6c6c6c; }

.status { display: flex; align-items: center; height: 15px; flex: none; padding: 0 5px; background: #f3f3f3; gap: 12px; color: #333; }
.acc { display: flex; gap: 2px; align-items: center; }
.stats { margin-left: auto; display: flex; gap: 9px; }
.views { display: flex; }
.views button { width: 26px; height: 15px; }
.views .on { background: #dcdcdc; }
.status > button { margin: 0 -6px; }
.status input { width: 60px; height: 8px; appearance: none; background: linear-gradient(#bbb, #bbb) center / 100% 1px no-repeat; }
.status input::-webkit-slider-thumb { appearance: none; width: 3px; height: 8px; background: #555; }
</style>
